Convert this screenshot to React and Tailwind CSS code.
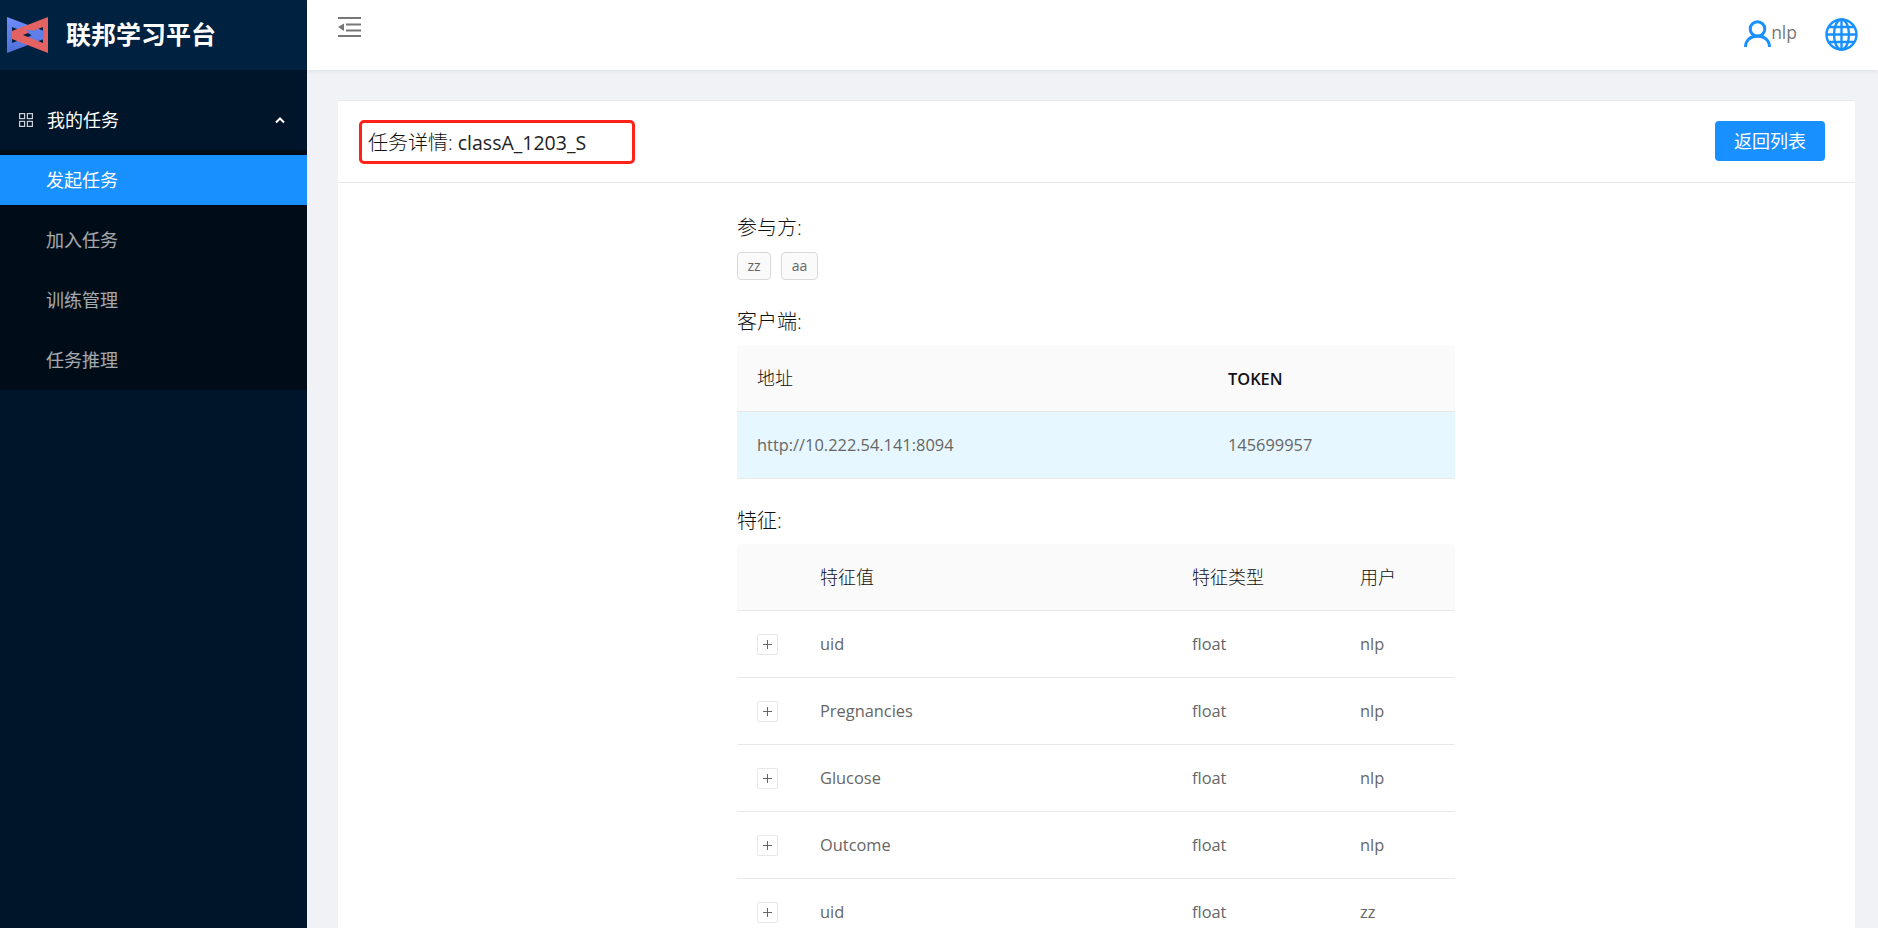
const font = { fontFamily: '"Open Sans", "Noto Sans CJK SC", sans-serif' }

const clientRow = { addr: 'http://10.222.54.141:8094', token: '145699957' }

const features = [
  { name: 'uid', type: 'float', user: 'nlp' },
  { name: 'Pregnancies', type: 'float', user: 'nlp' },
  { name: 'Glucose', type: 'float', user: 'nlp' },
  { name: 'Outcome', type: 'float', user: 'nlp' },
  { name: 'uid', type: 'float', user: 'zz' },
]

const Logo = () => (
  <svg width="42" height="38" viewBox="7 14 42 38" className="shrink-0">
    <defs>
      <linearGradient id="logoBlue" x1="0" y1="0" x2="0" y2="1">
        <stop offset="0" stopColor="#6f8dfb" />
        <stop offset="1" stopColor="#4f6fd8" />
      </linearGradient>
    </defs>
    <path d="M7 15 L44 29 L44 37 L7 51 Z M12 25 L12 41 L33 33 Z" fill="url(#logoBlue)" fillRule="evenodd" />
    <path d="M48 15 L48 51 L12 37 L12 29 Z M43 25 L23 33 L43 41 Z" fill="#e46262" fillRule="evenodd" />
    <path d="M26 28 L44 29 L44 37 L34 37 L31 33 Z" fill="#5f7ee8" />
  </svg>
)

const SideItem = ({ label, active }) => (
  <div
    className={`mb-[10px] flex h-[50px] items-center pl-[46px] text-lg last:mb-[5px] ${
      active ? 'bg-[#1890ff] text-white' : 'text-white/65'
    }`}
  >
    {label}
  </div>
)

function Sidebar() {
  return (
    <aside className="flex h-full w-[307px] shrink-0 flex-col bg-[#001529]">
      <div className="flex h-[70px] items-center gap-[17px] bg-[#002140] pl-[7px]">
        <Logo />
        <span className="text-[25px] font-bold text-white">联邦学习平台</span>
      </div>
      <div className="mt-[25px] mb-[5px] flex h-[50px] items-center pr-[22px] pl-[19px] text-lg text-white">
        <svg width="14" height="14" viewBox="0 0 14 14" fill="none" stroke="currentColor" strokeWidth="1.200" className="mr-[14px] opacity-80">
          <rect x="0.600" y="0.600" width="5" height="5" />
          <rect x="8.400" y="0.600" width="5" height="5" />
          <rect x="0.600" y="8.400" width="5" height="5" />
          <rect x="8.400" y="8.400" width="5" height="5" />
        </svg>
        <span>我的任务</span>
        <svg width="10" height="7" viewBox="0 0 10 7" fill="none" stroke="currentColor" strokeWidth="2" className="ml-auto">
          <path d="M1 5.500 L5 1.500 L9 5.500" />
        </svg>
      </div>
      <div className="bg-[#000c17] pt-[5px]">
        <SideItem label="发起任务" active />
        <SideItem label="加入任务" />
        <SideItem label="训练管理" />
        <SideItem label="任务推理" />
      </div>
    </aside>
  )
}

function Topbar() {
  return (
    <header className="flex h-[70px] shrink-0 justify-between bg-white pr-[20px] pl-[31px] shadow-[0_1px_4px_rgba(0,21,41,0.08)]">
      <svg width="23" height="20" viewBox="0 0 23 20" fill="#777" className="mt-[17px]">
        <rect x="0" y="0" width="23" height="2" />
        <rect x="8" y="6.500" width="15" height="2" />
        <rect x="8" y="12.500" width="15" height="2" />
        <rect x="0" y="18" width="23" height="2" />
        <path d="M0 10 L6 6.500 L6 14 Z" />
      </svg>
      <div className="flex items-center">
        <svg width="27" height="27" viewBox="0 0 27 27" fill="none" stroke="#1890ff" strokeWidth="3" className="mt-[-4px]">
          <circle cx="13.500" cy="9" r="7.300" />
          <path d="M1.500 27 C1.500 20 7 16 13.500 16 C20 16 25.500 20 25.500 27" />
        </svg>
        <span className="mb-[6px] text-[17.500px] text-[#777]">nlp</span>
        <svg width="33" height="33" viewBox="0 0 33 33" fill="none" stroke="#1890ff" strokeWidth="2.400" className="ml-[28px] mt-[-1px]">
          <circle cx="16.500" cy="16.500" r="15" />
          <ellipse cx="16.500" cy="16.500" rx="7.500" ry="15" />
          <path d="M16.500 1.500 V31.500 M1.500 16.500 H31.500 M4 9 H29 M4 24 H29" />
        </svg>
      </div>
    </header>
  )
}

const Th = ({ children, className = '' }) => (
  <th className={`border-b border-[#e8e8e8] bg-[#fafafa] px-[20px] text-left text-lg font-light text-[#111] ${className}`}>
    {children}
  </th>
)

const Td = ({ children, className = '' }) => (
  <td className={`border-b border-[#e8e8e8] px-[20px] pt-[1px] text-[16.400px] text-[#666] ${className}`}>{children}</td>
)

const Label = ({ children, className = '' }) => (
  <p className={`text-xl leading-[24px] font-light text-[#111] ${className}`}>{children}</p>
)

const Tag = ({ children }) => (
  <span className="flex h-[28px] items-center rounded-[4px] border border-[#d9d9d9] bg-[#fafafa] px-[9.500px] text-sm text-[#666]">
    {children}
  </span>
)

function Detail() {
  return (
    <div className="mx-auto w-[718px] pt-[33px]">
      <Label>参与方:</Label>
      <div className="mt-[12px] flex gap-[10px]">
        <Tag>zz</Tag>
        <Tag>aa</Tag>
      </div>
      <Label className="mt-[30px]">客户端:</Label>
      <table className="mt-[11px] w-full table-fixed border-separate border-spacing-0">
        <thead>
          <tr className="h-[67px]">
            <Th className="w-[471px] rounded-tl-[4px]">地址</Th>
            <Th className="rounded-tr-[4px]">
              <span className="text-[16.400px] font-semibold">TOKEN</span>
            </Th>
          </tr>
        </thead>
        <tbody>
          <tr className="h-[67px] bg-[#e6f7ff]">
            <Td>{clientRow.addr}</Td>
            <Td>{clientRow.token}</Td>
          </tr>
        </tbody>
      </table>
      <Label className="mt-[30px]">特征:</Label>
      <table className="mt-[11px] w-full table-fixed border-separate border-spacing-0">
        <thead>
          <tr className="h-[67px]">
            <Th className="w-[63px] rounded-tl-[4px]" />
            <Th className="w-[372px]">特征值</Th>
            <Th className="w-[168px]">特征类型</Th>
            <Th className="rounded-tr-[4px]">用户</Th>
          </tr>
        </thead>
        <tbody>
          {features.map((f, i) => (
            <tr key={i} className="h-[67px]">
              <Td>
                <span className="flex h-[21px] w-[21px] items-center justify-center rounded-[2px] border border-[#e8e8e8] text-[#666]">
                  <svg width="9" height="9" viewBox="0 0 9 9" stroke="currentColor" strokeWidth="1">
                    <path d="M4.500 0 V9 M0 4.500 H9" />
                  </svg>
                </span>
              </Td>
              <Td>{f.name}</Td>
              <Td>{f.type}</Td>
              <Td>{f.user}</Td>
            </tr>
          ))}
        </tbody>
      </table>
    </div>
  )
}

export default function App() {
  return (
    <div className="flex h-[928px] overflow-hidden bg-[#f0f2f5]" style={font}>
      <Sidebar />
      <main className="flex min-w-0 flex-1 flex-col">
        <Topbar />
        <div className="min-h-0 flex-1 pt-[30px] pr-[23px] pl-[31px]">
          <section className="h-[900px] rounded-[2px] border-t border-[#e8e8e8] bg-white pr-px">
            <div className="-mr-px flex h-[82px] items-center justify-between border-b border-[#e8e8e8] pr-[30px] pl-[21px]">
              <div className="flex h-[44px] w-[276px] items-center rounded-[5px] border-[3px] border-[#ff2219] pt-[2px] pl-[6px] text-xl font-light text-[#111]">
                任务详情: <span className="ml-[5px] text-[19.500px] font-normal text-[#222]">classA_1203_S</span>
              </div>
              <button className="mb-[2px] h-[40px] w-[110px] rounded-[4px] bg-[#1890ff] text-lg text-white">返回列表</button>
            </div>
            <Detail />
          </section>
        </div>
      </main>
    </div>
  )
}
